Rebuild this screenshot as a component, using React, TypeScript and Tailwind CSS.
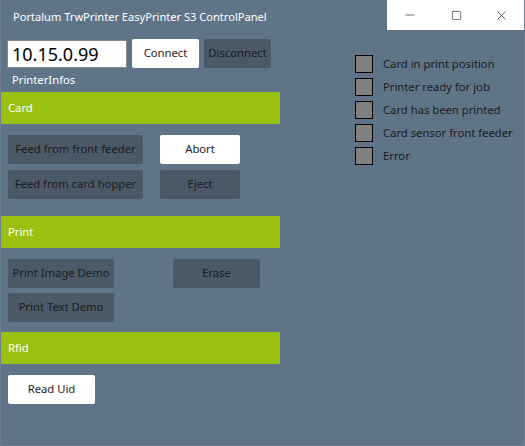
import React from 'react';
import { Minus, Square, X } from 'lucide-react';

const font = { fontFamily: '"Noto Sans", "Open Sans", sans-serif' };

const DarkButton: React.FC<{ label: string; className?: string }> = ({ label, className = '' }) => (
    <button className={`h-[29px] rounded-[2px] bg-[#4b5967] text-[11.25px] text-[#1c1c1c] ${className}`}>{label}</button>
);

const WhiteButton: React.FC<{ label: string; className?: string }> = ({ label, className = '' }) => (
    <button className={`h-[29px] rounded-[2px] bg-white text-[11.25px] text-[#1c1c1c] ${className}`}>{label}</button>
);

const Section: React.FC<{ title: string }> = ({ title }) => (
    <div className="h-[32px] w-[279px] bg-[#98c110] pl-[7px] flex items-center text-[11.25px] text-white">{title}</div>
);

const statuses = ['Card in print position', 'Printer ready for job', 'Card has been printed', 'Card sensor front feeder', 'Error'];

export default function App() {
    return (
        <div className="w-[525px] h-[446px] bg-[#607487] overflow-hidden flex flex-col border-l border-r border-b border-[#6e7f8f]" style={font}>
            <div className="h-[30px] flex items-start">
                <div className="flex-1 h-[30px] flex items-center pt-[4px] pl-[12px] text-[11.1px] text-white">Portalum TrwPrinter EasyPrinter S3 ControlPanel</div>
                <div className="w-[137px] h-[30px] bg-white flex items-center text-black">
                    <div className="w-[46px] flex justify-center"><Minus size={14} strokeWidth={1} /></div>
                    <div className="w-[46px] flex justify-center"><Square size={11} strokeWidth={1.2} /></div>
                    <div className="w-[45px] flex justify-center"><X size={15} strokeWidth={1} /></div>
                </div>
            </div>
            <div className="flex flex-1">
                <div className="w-[279px] flex flex-col">
                    <div className="flex items-center gap-[5px] pl-[6px] mt-[9px]">
                        <div className="w-[120px] h-[28px] bg-white border border-[#8a8a8a] flex items-center pl-[4px] text-[18px] text-black leading-none">10.15.0.99</div>
                        <WhiteButton label="Connect" className="w-[67px] h-[28px]" />
                        <DarkButton label="Disconnect" className="w-[67px] h-[28px]" />
                    </div>
                    <div className="pl-[11px] h-[24px] flex items-center text-[11.25px] text-white">PrinterInfos</div>
                    <Section title="Card" />
                    <div className="flex flex-col gap-[6px] pl-[7px] pt-[11px] pb-[17px]">
                        <div className="flex gap-[17px]">
                            <DarkButton label="Feed from front feeder" className="w-[135px]" />
                            <WhiteButton label="Abort" className="w-[80px]" />
                        </div>
                        <div className="flex gap-[17px]">
                            <DarkButton label="Feed from card hopper" className="w-[135px]" />
                            <DarkButton label="Eject" className="w-[80px]" />
                        </div>
                    </div>
                    <Section title="Print" />
                    <div className="flex flex-col gap-[5px] pl-[7px] pt-[11px] pb-[10px]">
                        <div className="flex gap-[59px]">
                            <DarkButton label="Print Image Demo" className="w-[106px]" />
                            <DarkButton label="Erase" className="w-[87px]" />
                        </div>
                        <DarkButton label="Print Text Demo" className="w-[106px]" />
                    </div>
                    <Section title="Rfid" />
                    <div className="pl-[7px] pt-[11px]">
                        <WhiteButton label="Read Uid" className="w-[87px]" />
                    </div>
                </div>
                <div className="flex flex-col gap-[5px] pl-[75px] pt-[25px]">
                    {statuses.map((s) => (
                        <div key={s} className="flex items-center gap-[10px] h-[18px]">
                            <div className="w-[18px] h-[18px] bg-[#808080] border border-black" />
                            <span className="text-[11.25px] text-[#1c1c1c]">{s}</span>
                        </div>
                    ))}
                </div>
            </div>
        </div>
    );
}
